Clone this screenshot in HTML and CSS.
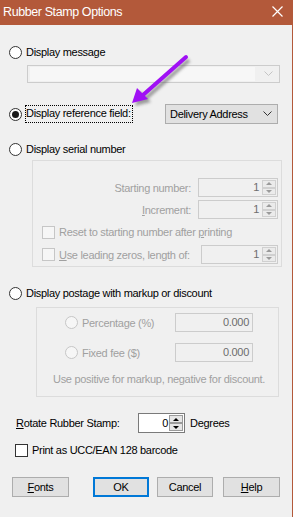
FILE: index.html
```html
<!DOCTYPE html>
<html lang="en">
<head>
  <meta charset="utf-8">
  <title>Rubber Stamp Options</title>
  <link rel="stylesheet" href="styles.css">
</head>
<body>
  <div class="window">
    <!-- title bar -->
    <div class="titlebar">
      <span class="title">Rubber Stamp Options</span>
      <svg class="close" width="11" height="11" viewBox="0 0 11 11"><path d="M0.5 0.5 L10.5 10.5 M10.5 0.5 L0.5 10.5" stroke="#fff" stroke-width="1.2" fill="none"/></svg>
    </div>

    <div class="content">
      <div class="opt row1"><span class="radio"></span><span>Display message</span></div>
      <div class="combo">
        <span class="combo-field"></span>
        <svg class="chev" width="9" height="6" viewBox="0 0 9 6"><polyline points="0.5,0.5 4.5,4.5 8.5,0.5" stroke="#c4c4c4" fill="none"/></svg>
      </div>

      <div class="opt row2">
        <span class="radio checked"></span><span class="focus">Display reference field:</span>
        <div class="select">
          <span>Delivery Address</span>
          <svg class="chev" width="9" height="6" viewBox="0 0 9 6"><polyline points="0.5,0.5 4.5,4.5 8.5,0.5" stroke="#333" fill="none"/></svg>
        </div>
      </div>

      <div class="opt row3"><span class="radio"></span><span>Display serial number</span></div>
      <div class="group serial">
        <div class="frow">
          <span class="flabel">Starting number:</span>
          <div class="spinbox w80"><span class="val">1</span><span class="spin"><span class="sb"><i class="up"></i></span><span class="sb"><i class="dn"></i></span></span></div>
        </div>
        <div class="frow inc">
          <span class="flabel"><u>I</u>ncrement:</span>
          <div class="spinbox w80"><span class="val">1</span><span class="spin"><span class="sb"><i class="up"></i></span><span class="sb"><i class="dn"></i></span></span></div>
        </div>
        <div class="crow reset"><span class="check dis"></span><span class="dtext">Reset to starting number after <u>p</u>rinting</span></div>
        <div class="crow zeros">
          <span class="check dis"></span><span class="dtext"><u>U</u>se leading zeros, length of:</span>
          <div class="spinbox w77"><span class="val">1</span><span class="spin"><span class="sb"><i class="up"></i></span><span class="sb"><i class="dn"></i></span></span></div>
        </div>
      </div>

      <div class="opt row4"><span class="radio"></span><span>Display postage with markup or discount</span></div>
      <div class="group postage">
        <div class="prow">
          <span class="radio dis"></span><span class="dtext plabel">Percentage (%)</span>
          <div class="numbox">0.000</div>
        </div>
        <div class="prow fixed">
          <span class="radio dis"></span><span class="dtext plabel">Fixed fee ($)</span>
          <div class="numbox">0.000</div>
        </div>
        <div class="hint">Use positive for markup, negative for discount.</div>
      </div>

      <div class="rotate">
        <span class="rlabel"><u>R</u>otate Rubber Stamp:</span>
        <div class="spinbox live"><span class="val">0</span><span class="spin"><span class="sb"><i class="up"></i></span><span class="sb"><i class="dn"></i></span></span></div>
        <span>Degrees</span>
      </div>
      <div class="crow barcode"><span class="check"></span><span>Print as UCC/EAN 128 barcode</span></div>

      <div class="buttons">
        <button class="btn fonts"><u>F</u>onts</button>
        <button class="btn ok">OK</button>
        <button class="btn cancel">Cancel</button>
        <button class="btn help"><u>H</u>elp</button>
      </div>
    </div>

    <!-- annotation arrow drawn over the dialog -->
    <svg class="arrow" width="295" height="130" viewBox="0 0 295 130">
      <defs>
        <filter id="blur" x="-20%" y="-20%" width="140%" height="140%"><feGaussianBlur stdDeviation="1.6"/></filter>
      </defs>
      <g filter="url(#blur)" opacity="0.55">
        <line x1="189" y1="60" x2="146" y2="98" stroke="#555" stroke-width="4"/>
        <polygon points="135,106 140,91 151,102" fill="#555"/>
      </g>
      <line x1="186" y1="57" x2="143" y2="95" stroke="#a010f5" stroke-width="4" stroke-linecap="round"/>
      <polygon points="132,103 137,88 148,99" fill="#a010f5"/>
    </svg>
  </div>
</body>
</html>
```

FILE: styles.css
```css
* { margin: 0; padding: 0; box-sizing: border-box; }
body {
  background: #fff;
  font-family: 'Liberation Sans', Arial, sans-serif;
  font-size: 11px;
  letter-spacing: -0.3px;
  color: #000;
}
u { text-decoration: underline; text-underline-offset: 1px; }

/* window frame */
.window {
  position: relative;
  width: 293px;
  height: 517px;
  background: #f0f0f0;
  border-right: 1px solid #b3593a;
  overflow: hidden;
}
.titlebar {
  height: 25px;
  background: #b3593a;
  color: #fff;
  display: flex;
  align-items: center;
  justify-content: space-between;
  padding: 0 9px 0 3px;
}
.title { font-size: 12.5px; letter-spacing: -0.4px; margin-top: -2px; }
.close { margin-top: -3px; }

.content { padding-left: 9px; }

/* radio + check */
.radio {
  width: 13px;
  height: 13px;
  border: 1px solid #333;
  border-radius: 50%;
  background: #fff;
  flex: none;
  margin-right: 4px;
  display: flex;
  align-items: center;
  justify-content: center;
}
.radio.checked::after {
  content: '';
  width: 7px;
  height: 7px;
  border-radius: 50%;
  background: #1a1a1a;
}
.radio.dis { border-color: #c6c6c6; background: #f6f6f6; }
.check {
  width: 13px;
  height: 13px;
  border: 1px solid #333;
  background: #fff;
  flex: none;
  margin-right: 4px;
}
.check.dis { border-color: #c6c6c6; background: #f6f6f6; }
.dtext { color: #a0a0a0; }

.opt { display: flex; align-items: center; height: 14px; }
.row1 { margin-top: 20px; }
.row2 { margin-top: 21px; height: 20px; padding-right: 14px; }
.row3 { margin-top: 18px; }
.row4 { margin-top: 19px; }

.combo {
  margin: 6px 0 0 18px;
  width: 253px;
  height: 18px;
  border: 1px solid #cccccc;
  background: #f0f0f0;
  display: flex;
  align-items: center;
  padding: 1px 6px 1px 2px;
}
.combo-field { flex: 1; height: 100%; background: #f7f7f7; margin-right: 9px; }
.focus {
  border: 1px dotted #000;
  padding: 1px 1px 2px 0;
  margin-left: -1px;
  line-height: 13px;
}
.select {
  margin-left: auto;
  width: 113px;
  height: 20px;
  background: #e1e1e1;
  border: 1px solid #adadad;
  display: flex;
  align-items: center;
  justify-content: space-between;
  padding: 0 5px 0 4px;
}

/* group boxes */
.group { border: 1px solid #dcdcdc; }
.serial {
  margin: 4px 0 0 23px;
  width: 250px;
  height: 107px;
  padding: 17px 3px 0 0;
}
.frow { display: flex; align-items: center; justify-content: flex-end; height: 19px; }
.frow.inc { margin-top: 3px; }
.flabel { color: #a0a0a0; margin-right: 7px; }
.crow { display: flex; align-items: center; height: 14px; }
.serial .crow { padding-left: 9px; }
.reset { margin-top: 6px; }
.zeros { margin-top: 6px; height: 19px; }
.zeros .spinbox { margin-left: auto; }

.spinbox {
  height: 19px;
  border: 1px solid #cccccc;
  background: #f0f0f0;
  display: flex;
  align-items: stretch;
  padding: 1px;
}
.w80 { width: 80px; }
.w77 { width: 77px; }
.val {
  flex: 1;
  text-align: right;
  color: #6d6d6d;
  line-height: 15px;
  padding-right: 3px;
}
.spin { display: flex; flex-direction: column; width: 14px; }
.sb {
  flex: 1;
  border: 1px solid #d0d0d0;
  background: #ebebeb;
  display: flex;
  align-items: center;
  justify-content: center;
}
.up { border: 3px solid transparent; border-bottom: 3px solid #9a9a9a; border-top: 0; }
.dn { border: 3px solid transparent; border-top: 3px solid #9a9a9a; border-bottom: 0; }

.postage {
  margin: 7px 0 0 27px;
  width: 243px;
  height: 90px;
  padding: 5px 0 0 28px;
}
.prow { display: flex; align-items: center; height: 19px; }
.prow.fixed { margin-top: 11px; }
.plabel { width: 93px; }
.numbox {
  width: 78px;
  height: 19px;
  border: 1px solid #cccccc;
  background: #f0f0f0;
  color: #6d6d6d;
  text-align: right;
  line-height: 17px;
  padding-right: 3px;
}
.hint { color: #a0a0a0; margin: 10px 0 0 -12px; line-height: 14px; white-space: nowrap; }

/* rotate + barcode */
.rotate { display: flex; align-items: center; height: 20px; margin-top: 16px; padding-left: 7px; }
.rlabel { width: 122px; }
.spinbox.live {
  width: 47px;
  height: 20px;
  background: #fff;
  border-color: #7a7a7a;
  margin-right: 5px;
}
.live .val { color: #000; line-height: 16px; padding-right: 1px; }
.live .sb { border-color: #9a9a9a; background: #e6e6e6; }
.live .up { border-bottom-color: #000; }
.live .dn { border-top-color: #000; }
.barcode { margin-top: 10px; padding-left: 6px; }

/* buttons */
.buttons { display: flex; margin-top: 20px; padding-left: 3px; height: 20px; }
.btn {
  height: 20px;
  background: #e1e1e1;
  border: 1px solid #adadad;
  font-family: inherit;
  font-size: 11px;
  letter-spacing: -0.3px;
  color: #000;
}
.fonts { width: 57px; }
.ok { width: 56px; margin-left: 24px; border: 2px solid #0078d7; }
.cancel { width: 56px; margin-left: 8px; }
.help { width: 57px; margin-left: 10px; }

.arrow { position: absolute; left: 0; top: 0; pointer-events: none; }
```
